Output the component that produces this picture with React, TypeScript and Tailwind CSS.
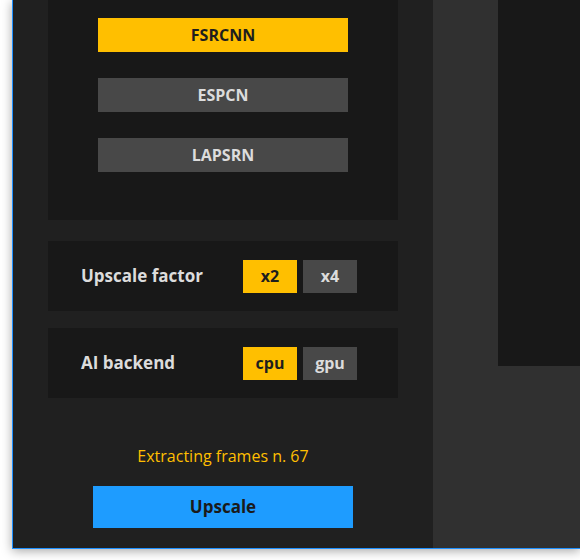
import { useState } from 'react';

const models = ['FSRCNN', 'ESPCN', 'LAPSRN'];

function Toggle({ options, value, onChange }: { options: string[]; value: string; onChange: (v: string) => void }) {
  return (
    <div className="flex gap-[6px]">
      {options.map((o) => (
        <button
          key={o}
          onClick={() => onChange(o)}
          className={
            'w-[54px] h-[33px] text-[16px] font-bold flex items-center justify-center ' +
            (o === value ? 'bg-[#ffbf00] text-[#1e1e1e]' : 'bg-[#484848] text-[#dcdcdc]')
          }
        >
          {o}
        </button>
      ))}
    </div>
  );
}

function OptionRow({ label, children }: { label: string; children: React.ReactNode }) {
  return (
    <div className="bg-[#181818] h-[70px] flex items-center pl-[33px]">
      <span className="w-[162px] text-[17px] font-bold text-[#dcdcdc]">{label}</span>
      {children}
    </div>
  );
}

export default function App() {
  const [model, setModel] = useState('FSRCNN');
  const [factor, setFactor] = useState('x2');
  const [backend, setBackend] = useState('cpu');

  return (
    <div className="w-[580px] h-[560px] bg-white overflow-hidden" style={{ fontFamily: '"Open Sans", "Noto Sans", sans-serif' }}>
      <div className="ml-[12px] w-[568px] h-[549px] border-l border-b border-[#1e90ff] shadow-[0_2px_10px_rgba(0,0,0,0.35)] flex">
        <div className="w-[420px] bg-[#202020] flex flex-col">
          <div className="ml-[35px] w-[350px] bg-[#181818] h-[220px] pt-[18px] flex flex-col items-center gap-[26px]">
            {models.map((m) => (
              <button
                key={m}
                onClick={() => setModel(m)}
                className={
                  'w-[250px] h-[34px] text-[16px] font-bold flex items-center justify-center ' +
                  (m === model ? 'bg-[#ffbf00] text-[#1e1e1e]' : 'bg-[#484848] text-[#dcdcdc]')
                }
              >
                {m}
              </button>
            ))}
          </div>
          <div className="ml-[35px] w-[350px] mt-[21px]">
            <OptionRow label="Upscale factor">
              <Toggle options={['x2', 'x4']} value={factor} onChange={setFactor} />
            </OptionRow>
          </div>
          <div className="ml-[35px] w-[350px] mt-[17px]">
            <OptionRow label="AI backend">
              <Toggle options={['cpu', 'gpu']} value={backend} onChange={setBackend} />
            </OptionRow>
          </div>
          <div className="ml-[35px] w-[350px] mt-[47px] flex flex-col items-center">
            <p className="text-[16px] text-[#ffbf00] leading-[22px]">Extracting frames n. 67</p>
            <button className="mt-[19px] w-[260px] h-[42px] bg-[#1e9cff] text-[#1a1a1a] text-[17px] font-bold">
              Upscale
            </button>
          </div>
        </div>
        <div className="flex-1 bg-[#303030] flex justify-end">
          <div className="w-[82px] h-[366px] bg-[#181818]" />
        </div>
      </div>
    </div>
  );
}
